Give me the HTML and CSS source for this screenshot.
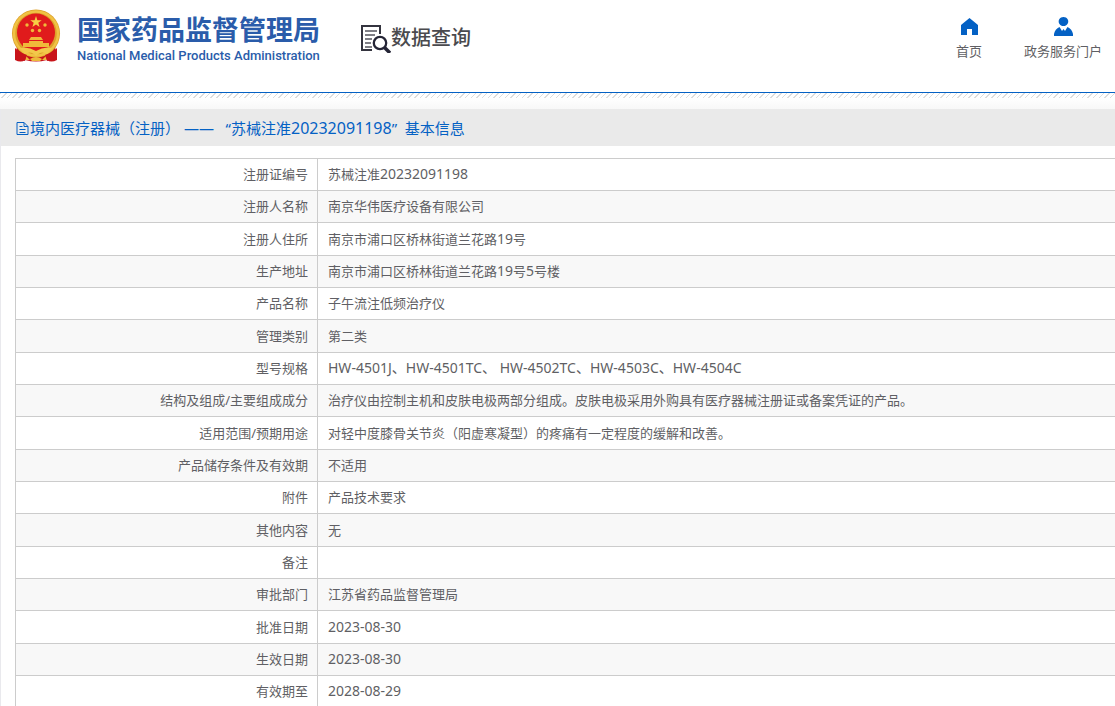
FILE: index.html
```
<!DOCTYPE html>
<html lang="zh-CN">
<head>
	<meta charset="utf-8">
	<title>国家药品监督管理局数据查询</title>
	<link rel="stylesheet" href="styles.css">
</head>
<body>
	<!-- 头部 -->
	<header class="header">
		<a class="logo" href="#">
			<svg class="emblem" viewBox="0 0 50 54" aria-hidden="true">
				<path d="M6 37 L4 51 Q10 54 14 51 Q25 54 36 51 Q40 54 46 51 L44 37 Z" fill="#c8141a"/>
				<circle cx="25" cy="24.500" r="24" fill="#dda02a"/>
				<circle cx="25" cy="24.500" r="22" fill="none" stroke="#f0c244" stroke-width="2.500"/>
				<circle cx="25" cy="23.500" r="19" fill="#e01b1c"/>
				<path d="M25 7 L26.400 11.200 L30.700 11.200 L27.300 13.800 L28.600 18 L25 15.500 L21.400 18 L22.700 13.800 L19.300 11.200 L23.600 11.200 Z" fill="#f7cf45"/>
				<g fill="#f0b93a">
					<circle cx="16" cy="16" r="1.700"/>
					<circle cx="34" cy="16" r="1.700"/>
					<circle cx="21.500" cy="21.500" r="1.700"/>
					<circle cx="28.500" cy="21.500" r="1.700"/>
					<path d="M20 28 H30 L32 31 H18 Z M18 32 H32 V34 H38 V38 H12 V34 H18 Z"/>
				</g>
				<path d="M9 39 Q17 37 25 42 Q33 37 41 39 L36 45 Q30 41 25 47 Q20 41 14 45 Z" fill="#f2c94a"/>
				<path d="M11 51 L15 47 L19 51 Z M39 51 L35 47 L31 51 Z M19 50 Q25 46 31 50 L29 52 H21 Z" fill="#edb93b"/>
				<path d="M4 39 Q9 44 16 46 L14 52 Q8 50 4 51 Z M46 39 Q41 44 34 46 L36 52 Q42 50 46 51 Z" fill="#c8141a"/>
			</svg>
			<span class="logo-text">
				<strong>国家药品监督管理局</strong>
				<span class="logo-en">National Medical Products Administration</span>
			</span>
		</a>
		<div class="query">
			<svg class="query-icon" viewBox="0 0 31 30" aria-hidden="true">
				<path d="M12 27 H2 V3 H20 V11" fill="none" stroke="#34343f" stroke-width="2"/>
				<path d="M5 8 H17 M5 12 H15 M5 16 H12 M5 20 H11 M5 24 H12" stroke="#55555f" stroke-width="1.500"/>
				<circle cx="20" cy="20" r="6.200" fill="#fff" stroke="#252536" stroke-width="2.300"/>
				<path d="M24.500 24.500 L30 30" stroke="#252536" stroke-width="3.500"/>
			</svg>
			<span>数据查询</span>
		</div>
		<nav class="nav">
			<a href="#">
				<svg viewBox="0 0 20 20" aria-hidden="true"><path d="M10.500 1 L19 8 V18 H13 V12 H8 V18 H2 V8 Z" fill="#0461c4"/></svg>
				<span>首页</span>
			</a>
			<a href="#">
				<svg viewBox="0 0 20 20" aria-hidden="true"><path d="M10.500 0 A4.800 4.500 0 1 1 10.400 0 Z M6.500 10 L9 14 L10.500 12 L12 14 L14.500 10 Q19 12 20 17 V19 H1 V17 Q2 12 6.500 10 Z" fill="#0461c4"/></svg>
				<span>政务服务门户</span>
			</a>
		</nav>
	</header>
	<div class="stripes"></div>

	<!-- 详情 -->
	<main class="detail">
		<h1 class="title">
			<svg viewBox="0 0 14 16" aria-hidden="true"><path d="M1.500 2.500 H8.500 L12.500 6.500 V14.500 H1.500 Z M8.500 2.500 V6.500 H12.500 M4 6.500 H7 M4 9.500 H10 M4 12.500 H10" fill="none" stroke="#0461c4"/></svg>
			<span>境内医疗器械（注册） ——&nbsp;&nbsp; “苏械注准<span class="num">20232091198</span>”&nbsp; 基本信息</span>
		</h1>
		<div class="panel">
			<table class="info">
				<tbody>
					<tr><th scope="row">注册证编号</th><td>苏械注准<span class="num">20232091198</span></td></tr>
					<tr><th scope="row">注册人名称</th><td>南京华伟医疗设备有限公司</td></tr>
					<tr><th scope="row">注册人住所</th><td>南京市浦口区桥林街道兰花路<span class="num">19</span>号</td></tr>
					<tr><th scope="row">生产地址</th><td>南京市浦口区桥林街道兰花路<span class="num">19</span>号<span class="num">5</span>号楼</td></tr>
					<tr><th scope="row">产品名称</th><td>子午流注低频治疗仪</td></tr>
					<tr><th scope="row">管理类别</th><td>第二类</td></tr>
					<tr><th scope="row">型号规格</th><td><span class="num">HW-4501J、HW-4501TC、 HW-4502TC、HW-4503C、HW-4504C</span></td></tr>
					<tr><th scope="row">结构及组成/主要组成成分</th><td>治疗仪由控制主机和皮肤电极两部分组成。皮肤电极采用外购具有医疗器械注册证或备案凭证的产品。</td></tr>
					<tr><th scope="row">适用范围/预期用途</th><td>对轻中度膝骨关节炎（阳虚寒凝型）的疼痛有一定程度的缓解和改善。</td></tr>
					<tr><th scope="row">产品储存条件及有效期</th><td>不适用</td></tr>
					<tr><th scope="row">附件</th><td>产品技术要求</td></tr>
					<tr><th scope="row">其他内容</th><td>无</td></tr>
					<tr><th scope="row">备注</th><td></td></tr>
					<tr><th scope="row">审批部门</th><td>江苏省药品监督管理局</td></tr>
					<tr><th scope="row">批准日期</th><td><span class="num">2023-08-30</span></td></tr>
					<tr><th scope="row">生效日期</th><td><span class="num">2023-08-30</span></td></tr>
					<tr><th scope="row">有效期至</th><td><span class="num">2028-08-29</span></td></tr>
				</tbody>
			</table>
		</div>
	</main>
</body>
</html>
```
FILE: styles.css
```
* {
	box-sizing: border-box;
}

body {
	margin: 0;
	background: #fff;
	color: #5f5f64;
	font: 13px/20px "Noto Sans", "Noto Sans CJK SC", sans-serif;
}

a {
	color: inherit;
	text-decoration: none;
}

svg {
	display: block;
	flex: none;
}

/* 头部 */
.header {
	display: flex;
	align-items: flex-start;
	height: 93px;
	padding: 9px 13px 0 11px;
	border-bottom: 1px solid #0461c4;
}

.logo {
	display: flex;
	gap: 16px;
	color: #2a5caa;
}

.emblem {
	width: 50px;
	height: 54px;
}

.logo-text {
	display: flex;
	flex-direction: column;
	padding-top: 5px;
	white-space: nowrap;
}

.logo-text strong {
	font-size: 27px;
	line-height: 32px;
}

.logo-en {
	font: 500 13px/20px Roboto, sans-serif;
}

.query {
	display: flex;
	align-items: center;
	margin: 14px 0 0 40px;
	color: #4a4a4e;
	font-size: 20px;
	font-weight: 500;
	line-height: 30px;
	white-space: nowrap;
}

.query-icon {
	width: 31px;
	height: 30px;
}

.nav {
	display: flex;
	gap: 42px;
	margin-left: auto;
	padding-top: 8px;
}

.nav a {
	display: flex;
	flex-direction: column;
	align-items: center;
	gap: 4px;
	white-space: nowrap;
}

.nav svg {
	width: 20px;
	height: 20px;
}

.stripes {
	height: 16px;
	background:
		repeating-linear-gradient(135deg, #ddd 0 1px, transparent 1px 4px) top / 100% 5px no-repeat,
		linear-gradient(#fff 30%, #f8f8f8);
}

/* 详情 */
.detail {
	border-left: 1px solid #e9e9ed;
}

.title {
	display: flex;
	align-items: center;
	height: 37px;
	margin: 0;
	padding: 0 14px;
	background: #eaeaea;
	color: #0461c4;
	font-size: 15px;
	font-weight: 400;
	line-height: 24px;
}

.title svg {
	width: 15px;
	height: 16px;
}

.title .num {
	font-size: 16px;
}

.panel {
	padding: 12px 0 0 14px;
}

.info {
	width: 100%;
	border-collapse: collapse;
	table-layout: fixed;
}

.info tr {
	height: 32px;
}

.info tr:nth-child(3n) {
	height: 33px;
}

.info tr:nth-child(even) {
	background: #f8f8f8;
}

.info th,
.info td {
	padding: 0 9px 1px;
	border: 1px solid #ccc;
	font-weight: 400;
}

.info th {
	width: 302px;
	text-align: right;
}

.info td {
	padding-left: 10px;
	border-right: 0;
	text-align: left;
}

.num {
	font-size: 14px;
}
```
